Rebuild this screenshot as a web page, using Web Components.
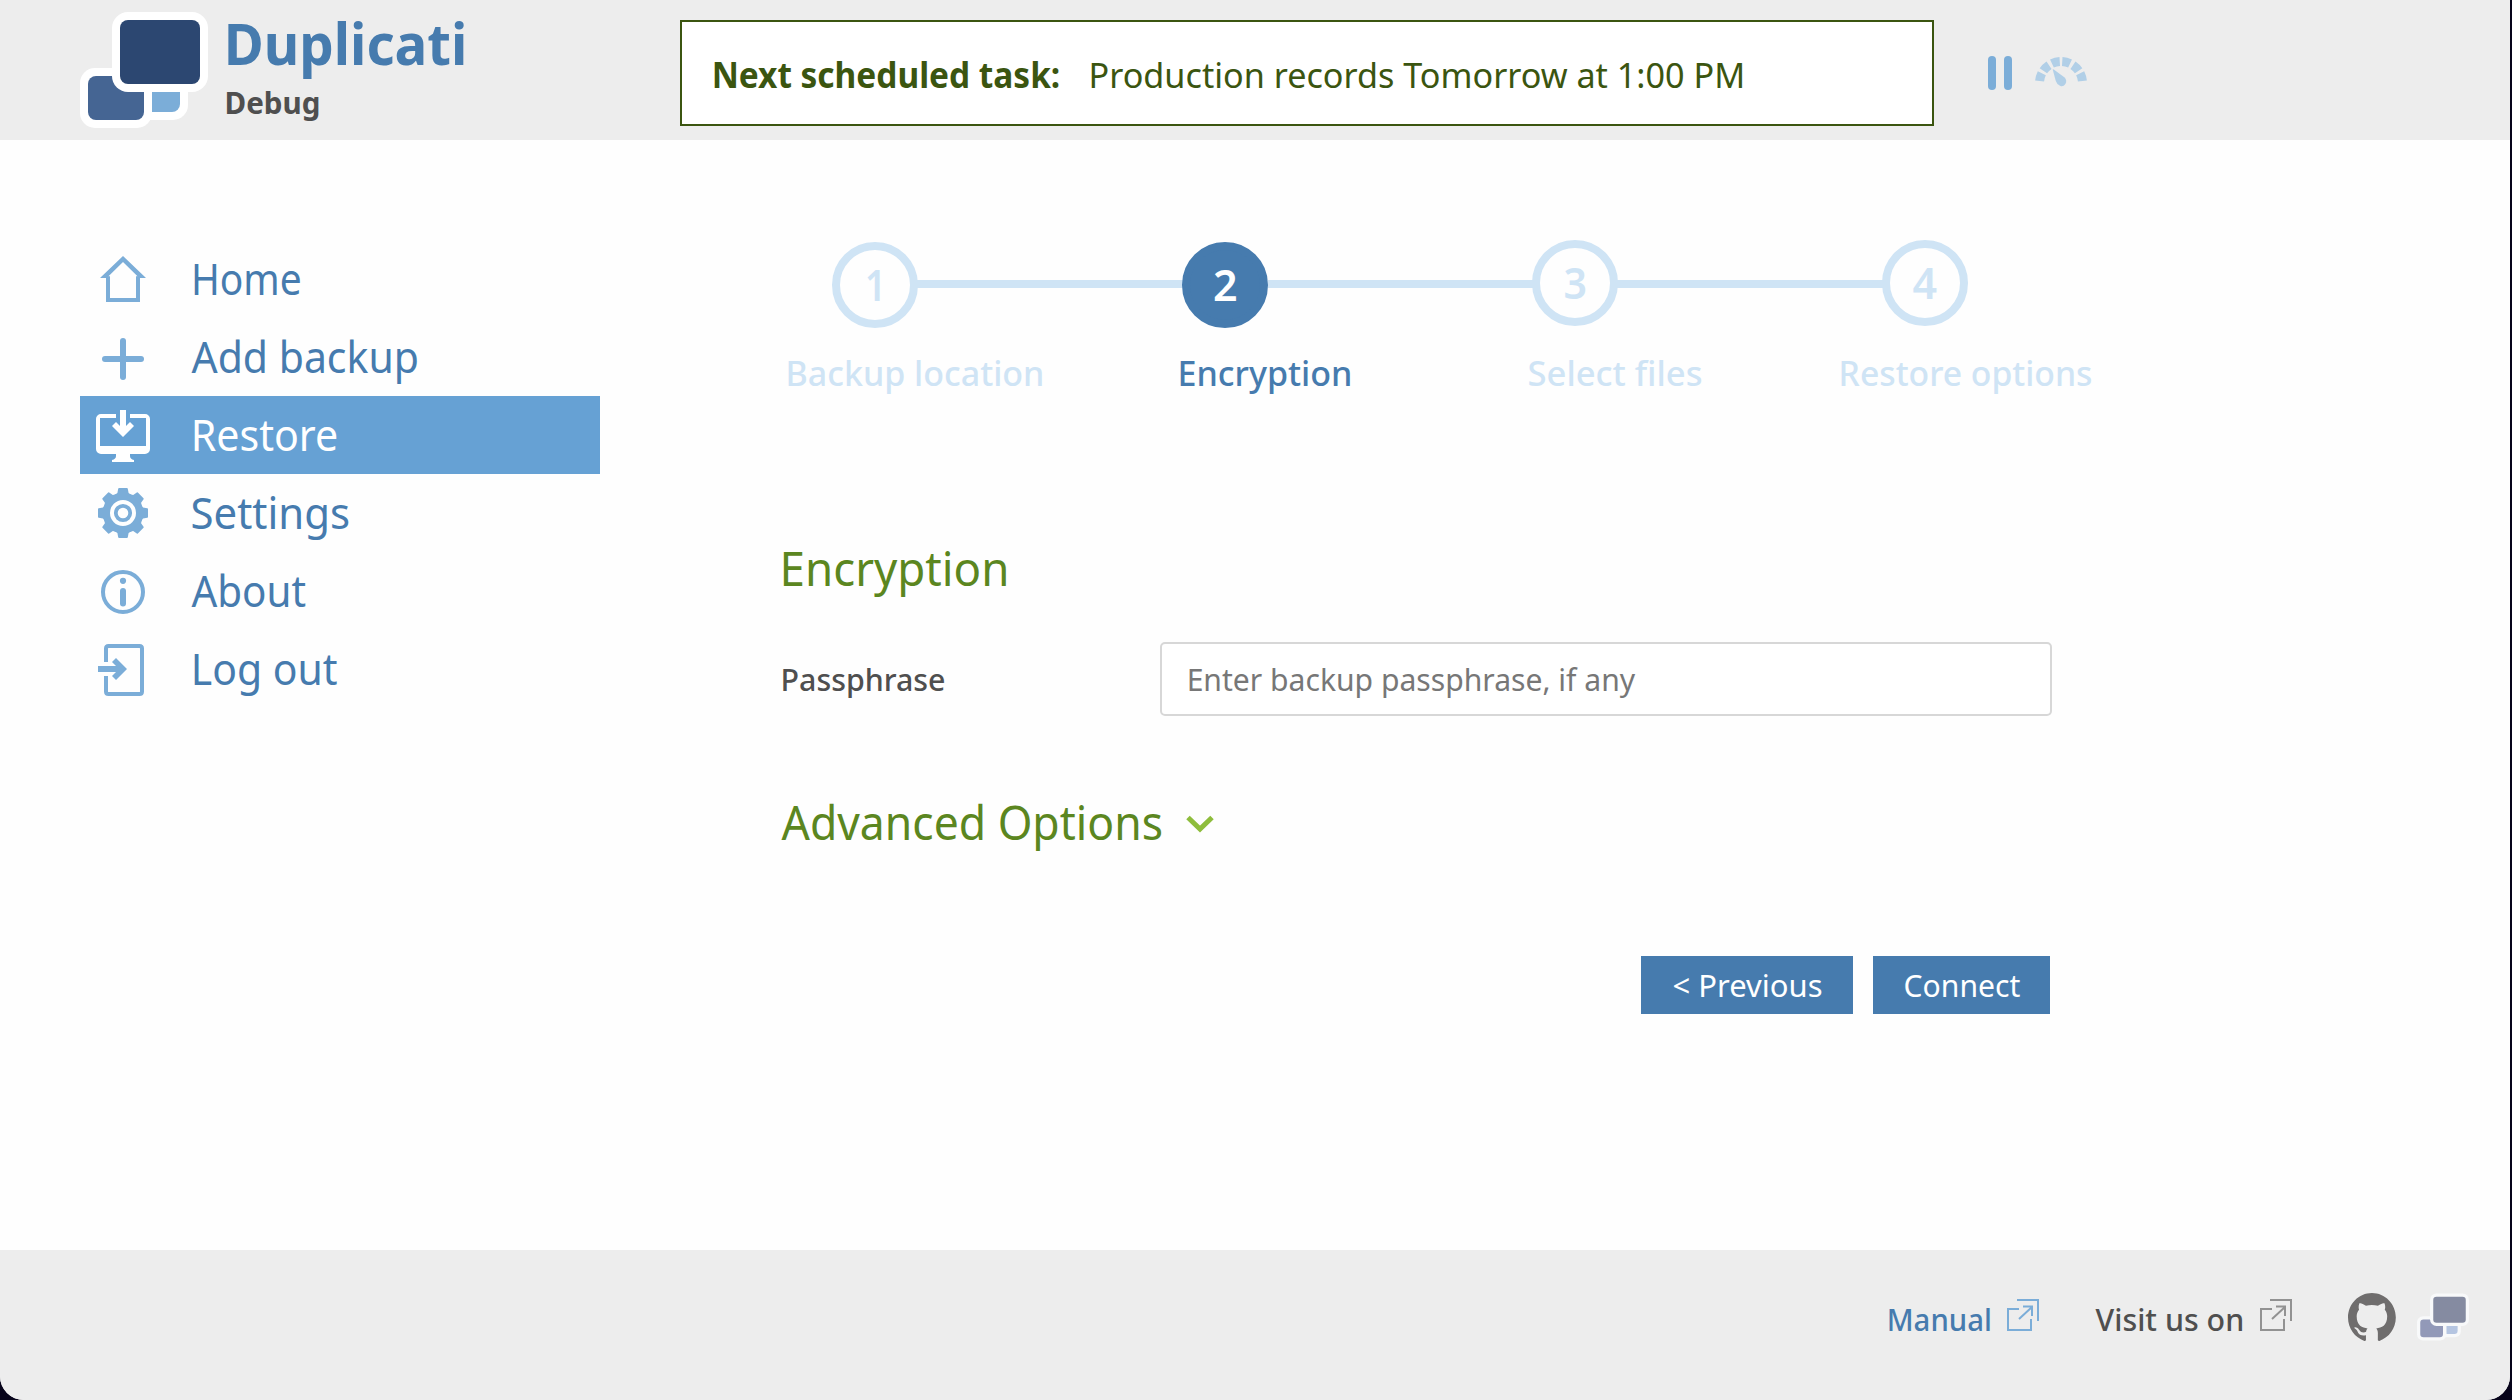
<!DOCTYPE html>
<html lang="en">
<head>
<meta charset="utf-8">
<title>Duplicati</title>
<style>
html,body{margin:0;height:100%;background:#07041a}
body{font-family:"Noto Sans","Open Sans",sans-serif;overflow:hidden}
</style>
</head>
<body>
<dup-app></dup-app>
<script>
const FAMILY = '"Noto Sans","Open Sans",sans-serif';
const pen = document.createElement('canvas').getContext('2d');
function define(name, html, setup) {
  const t = document.createElement('template');
  t.innerHTML = html;
  customElements.define(name, class extends HTMLElement {
    connectedCallback() {
      if (this.shadowRoot) return;
      this.attachShadow({ mode: 'open' }).append(t.content.cloneNode(true));
      if (setup) setup(this, this.shadowRoot);
    }
  });
}

/* Text run: size, weight (wt) and ink width (w); the glyphs are condensed to fit */
define('ui-text', `<style>
:host{display:block;flex:none;white-space:nowrap}
span{display:block;width:max-content;transform-origin:0 50%}
</style><span><slot></slot></span>`, (el, root) => {
  const size = +el.getAttribute('size'), wt = el.getAttribute('wt') || 400, w = +el.getAttribute('w');
  pen.font = `${wt} ${size}px ${FAMILY}`;
  const m = pen.measureText(el.textContent);
  const k = w / (m.actualBoundingBoxLeft + m.actualBoundingBoxRight);
  el.style.cssText += `;width:${w}px;height:${size}px;font-size:${size}px;line-height:${size}px;font-weight:${wt}`;
  root.querySelector('span').style.transform = `translate(${m.actualBoundingBoxLeft * k + .5}px,-.012em) scaleX(${k})`;
});

define('dup-logo', `<style>
:host{display:block;flex:none;width:128px;height:116px}svg{display:block;width:100%;height:100%}
.e{fill:var(--edge,#fff)}.a{fill:var(--a,#2c4771)}.b{fill:var(--b,#456593)}.c{fill:var(--c,#7badd8)}
</style><svg viewBox="0 0 128 116"><rect class="e" x="56" y="50" width="52" height="58" rx="15"/><rect class="c" x="72" y="60" width="28" height="40" rx="8"/><path class="c" d="M72 80h10v20h-10z"/>
<rect class="e" y="56" width="72" height="60" rx="15"/><rect class="b" x="8" y="64" width="56" height="44" rx="8"/>
<rect class="e" x="32" width="96" height="80" rx="16"/><path class="e" d="M64 78h8v24h-8z"/><rect class="a" x="40" y="8" width="80" height="64" rx="8"/></svg>`);

const ICONS = {
  home: '<path fill-rule="evenodd" d="M43 16L66 38H60V62H26V38H20ZM43 22L28.5 36.2H30V58H56V36.2H57.5Z"/>',
  add: '<rect x="22" y="38" width="42" height="6" rx="3"/><rect x="40" y="20" width="6" height="42" rx="3"/>',
  restore: '<path d="M36 18H21a5 5 0 0 0-5 5V53a5 5 0 0 0 5 5H36V60Q36 63 32 64V66H54V64Q50 63 50 60V58H65a5 5 0 0 0 5-5V23a5 5 0 0 0-5-5H50V22H66V50H20V22H36Z"/><path d="M40 14H46V30L50 26L54 30L43 41L32 30L36 26L40 30Z"/>',
  settings: '<g transform="translate(43 39)"><circle r="16.5" fill="none" stroke="currentColor" stroke-width="7"/>' +
    [0,45,90,135,180,225,270,315].map(a => `<path transform="rotate(${a})" d="M-8.5 -18L-5.6 -20L-4.8 -24.3Q-4.6 -25 -4 -25H4Q4.6 -25 4.8 -24.3L5.6 -20L8.5 -18Z"/>`).join('') +
    '<circle r="7.2" fill="none" stroke="currentColor" stroke-width="3.8"/></g>',
  about: '<circle cx="43" cy="40" r="20" fill="none" stroke="currentColor" stroke-width="4"/><circle cx="43" cy="28.8" r="3.1"/><rect x="40" y="36" width="6" height="18.4" rx="3"/>',
  logout: '<path d="M26 32V18.500Q26 16 28.500 16H59.500Q62 16 62 18.500V61.500Q62 64 59.500 64H28.500Q26 64 26 61.500V46" fill="none" stroke="currentColor" stroke-width="4"/><path d="M18 36H36L32 32L36 28L47 39L36 50L32 46L36 42H18Z"/>'
};
define('nav-item', `<style>
:host{display:flex;align-items:center;width:520px;height:78px;color:#467bae}
:host([active]){background:#66a1d4;color:#fff}
svg{width:86px;height:78px;flex:none;fill:currentColor;color:#7badd8}
:host([active]) svg{color:#fff}
</style><svg viewBox="0 0 86 78"></svg><slot></slot>`, (el, root) => {
  root.querySelector('svg').innerHTML = ICONS[el.getAttribute('icon')];
});

define('task-status', `<style>
:host{display:flex;align-items:center;box-sizing:border-box;width:1254px;height:106px;border:2px solid #3b5510;background:#fff;color:#3b5510;padding:2px 0 0 32px;gap:32px}
</style><slot></slot>`);

define('status-controls', `<style>
:host{display:flex;align-items:flex-start;gap:22px}svg{display:block}
</style>
<svg width="24" height="34" fill="#7badd8"><rect width="8" height="34" rx="4"/><rect x="16" width="8" height="34" rx="4"/></svg>
<svg width="54" height="34" viewBox="0 0 54 34"><path d="M5.500 27A21.500 21.500 0 0 1 48.500 27" pathLength="180" stroke-dasharray="0 5.500 21.500 8 21 9 21.500 7 21.500 9 21 8 21.500 60" fill="none" stroke="#b1cfe7" stroke-width="9"/><path d="M18.700 13.500Q18.800 12.900 19.800 13.600L30.300 21.200Q33.500 24.200 31.400 28Q29.300 31 26.400 30Q22.800 28.500 21.800 25Z" fill="#b1cfe7"/></svg>`);

define('app-header', `<style>
:host{display:flex;align-items:flex-start;height:140px;background:#ededed}
dup-logo{margin:12px 0 0 80px}
.brand{display:flex;flex-direction:column;gap:15px;margin:16px 0 0 18.500px;width:453.500px;color:#467bae}
.brand :last-child{color:#4f4f4f}
task-status{margin-top:20px}
status-controls{margin:56px 0 0 54px}
</style><dup-logo></dup-logo>
<div class="brand"><ui-text size="57" wt="700" w="237">Duplicati</ui-text><ui-text style="margin-left:-1px" size="30" wt="700" w="92">Debug</ui-text></div>
<task-status><ui-text size="35" wt="700" w="344">Next scheduled task:</ui-text><ui-text style="margin-left:1px" size="35" w="651">Production records Tomorrow at 1:00 PM</ui-text></task-status>
<status-controls></status-controls>`);

define('step-dot', `<style>
:host{display:flex;flex:none;align-items:center;justify-content:center;box-sizing:border-box;width:86px;height:86px;border:8px solid #cfe4f5;border-radius:50%;color:#cfe4f5}
:host([active]){background:#467bae;border-color:#467bae;color:#fff}
</style><slot></slot>`);

define('wizard-steps', `<style>
:host{display:block}
.dots{display:flex;align-items:flex-start;padding-left:52px}
.dots i{width:268px;height:8px;margin:40px -2px 0;background:#cfe4f5}
.dots step-dot[active]+i{width:266px;margin-left:0}
.low{margin-top:2px}
.labels{display:flex;margin-top:27px;padding:0 0 2px 8px;color:#cfe4f5}
.on{color:#467bae}
</style>
<div class="dots"><step-dot class="low"><ui-text style="margin-left:-5px" size="43" wt="600" w="12">1</ui-text></step-dot><i></i><step-dot class="low" active><ui-text style="margin-left:-1px" size="43" wt="600" w="22">2</ui-text></step-dot><i></i><step-dot><ui-text style="margin-left:-2px" size="43" wt="600" w="21">3</ui-text></step-dot><i></i><step-dot><ui-text style="margin-left:-2px" size="43" wt="600" w="24">4</ui-text></step-dot></div>
<div class="labels"><ui-text size="35" wt="500" w="254">Backup location</ui-text><ui-text class="on" style="margin-left:138px" size="35" wt="500" w="170">Encryption</ui-text><ui-text style="margin-left:178px" size="35" wt="500" w="173">Select files</ui-text><ui-text style="margin-left:140px" size="35" wt="500" w="250">Restore options</ui-text></div>`);

define('pass-field', `<style>
:host{display:flex;align-items:center;color:#4f4f4f;padding-left:2px}
.box{display:flex;align-items:center;box-sizing:border-box;width:892px;height:74px;margin-left:216px;padding-left:27px;border:2px solid #d7d7d7;border-radius:5px;background:#fff;color:#777}
</style><ui-text size="31.500" wt="500" w="162">Passphrase</ui-text><div class="box" role="textbox"><ui-text size="31.500" w="446.500">Enter backup passphrase, if any</ui-text></div>`);

define('ui-button', `<style>
:host{display:flex;align-items:center;justify-content:center;height:58px;background:#467bae;color:#fff}
</style><slot></slot>`);

define('ext-icon', `<style>:host{display:block;flex:none;width:32px;height:32px}svg{display:block}</style>
<svg width="32" height="32" fill="none" stroke="currentColor" stroke-width="2"><path d="M10 1H31V22M12 10H1V31H24V20M12 20L25 8M16 7.500H25V17"/></svg>`);

define('app-footer', `<style>
:host{display:flex;align-items:center;justify-content:flex-end;box-sizing:border-box;height:150px;background:#ededed;padding:0 41px 16px 0;color:#4f4f4f}
.m{color:#467bae;margin-top:4px}.v{margin:4px 0 0 56px}
ext-icon{margin-left:18px;color:#7badd8}ext-icon.g{color:#929292}
ext-icon{margin-top:-4px}
svg{margin-left:56px}
dup-logo{width:52px;height:48px;margin-left:21px;--edge:#f8f9fa;--a:#858ba1;--b:#9299b8;--c:#b5c5e1}
</style>
<ui-text class="m" size="31.500" wt="500" w="100">Manual</ui-text><ext-icon></ext-icon>
<ui-text class="v" size="31.500" wt="500" w="147">Visit us on</ui-text><ext-icon class="g"></ext-icon>
<svg width="48" height="48" viewBox="0 0 98 96" preserveAspectRatio="none" fill="#6f6d6d"><path fill-rule="evenodd" d="M48.854 0C21.839 0 0 22 0 49.217c0 21.756 13.993 40.172 33.405 46.69 2.427.49 3.316-1.059 3.316-2.362 0-1.141-.08-5.052-.08-9.127-13.59 2.934-16.42-5.867-16.42-5.867-2.184-5.704-5.42-7.17-5.42-7.17-4.448-3.015.324-3.015.324-3.015 4.934.326 7.523 5.052 7.523 5.052 4.367 7.496 11.404 5.378 14.235 4.074.404-3.178 1.699-5.378 3.074-6.6-10.839-1.141-22.243-5.378-22.243-24.283 0-5.378 1.94-9.778 5.014-13.2-.485-1.222-2.184-6.275.486-13.038 0 0 4.125-1.304 13.426 5.052a46.97 46.97 0 0 1 12.214-1.63c4.125 0 8.33.571 12.213 1.63 9.302-6.356 13.427-5.052 13.427-5.052 2.67 6.763.97 11.816.485 13.038 3.155 3.422 5.015 7.822 5.015 13.2 0 18.905-11.404 23.06-22.324 24.283 1.78 1.548 3.316 4.481 3.316 9.126 0 6.6-.08 11.897-.08 13.526 0 1.304.89 2.853 3.316 2.364 19.412-6.52 33.405-24.935 33.405-46.691C97.707 22 75.788 0 48.854 0z"/></svg>
<dup-logo></dup-logo>`);

define('dup-app', `<style>
:host{display:flex;flex-direction:column;width:2510px;height:1400px;background:#fefefe;border-radius:0 0 24px 24px;overflow:hidden}
.main{display:flex;flex:1;align-items:flex-start}
nav{margin:100px 0 0 80px}
section{width:1320px;margin:100px 0 0 180px}
h2{display:flex;align-items:center;margin:0;padding-left:3px;color:#5b8620;font-weight:400;gap:25px}
h2.adv{padding-left:1px;margin-top:84px}
pass-field{margin-top:49px}
.enc{margin-top:154px}
.actions{display:flex;justify-content:flex-end;gap:20px;width:1270px;margin-top:109px}
</style>
<app-header></app-header>
<div class="main">
<nav>
<nav-item icon="home"><ui-text style="margin-left:28px" size="43" w="106">Home</ui-text></nav-item>
<nav-item icon="add"><ui-text style="margin-left:25px" size="43" w="226">Add backup</ui-text></nav-item>
<nav-item icon="restore" active><ui-text style="margin-left:28px" size="43" w="142.500">Restore</ui-text></nav-item>
<nav-item icon="settings"><ui-text style="margin-left:26px" size="43" w="156">Settings</ui-text></nav-item>
<nav-item icon="about"><ui-text style="margin-left:25px" size="43" w="114">About</ui-text></nav-item>
<nav-item icon="logout"><ui-text style="margin-left:28px" size="43" w="142.500">Log out</ui-text></nav-item>
</nav>
<section>
<wizard-steps></wizard-steps>
<h2 class="enc"><ui-text size="47" w="223">Encryption</ui-text></h2>
<pass-field></pass-field>
<h2 class="adv"><ui-text size="47" w="380">Advanced Options</ui-text><svg width="28" height="18" viewBox="0 0 28 18"><path d="M2 2.500L14 14L26 2.500" fill="none" stroke="#8ebd3c" stroke-width="5"/></svg></h2>
<div class="actions"><ui-button style="width:212px"><ui-text size="31.500" w="148">&lt; Previous</ui-text></ui-button><ui-button style="width:177px"><ui-text size="31.500" w="115.500">Connect</ui-text></ui-button></div>
</section>
</div>
<app-footer></app-footer>`);
</script>
</body>
</html>
